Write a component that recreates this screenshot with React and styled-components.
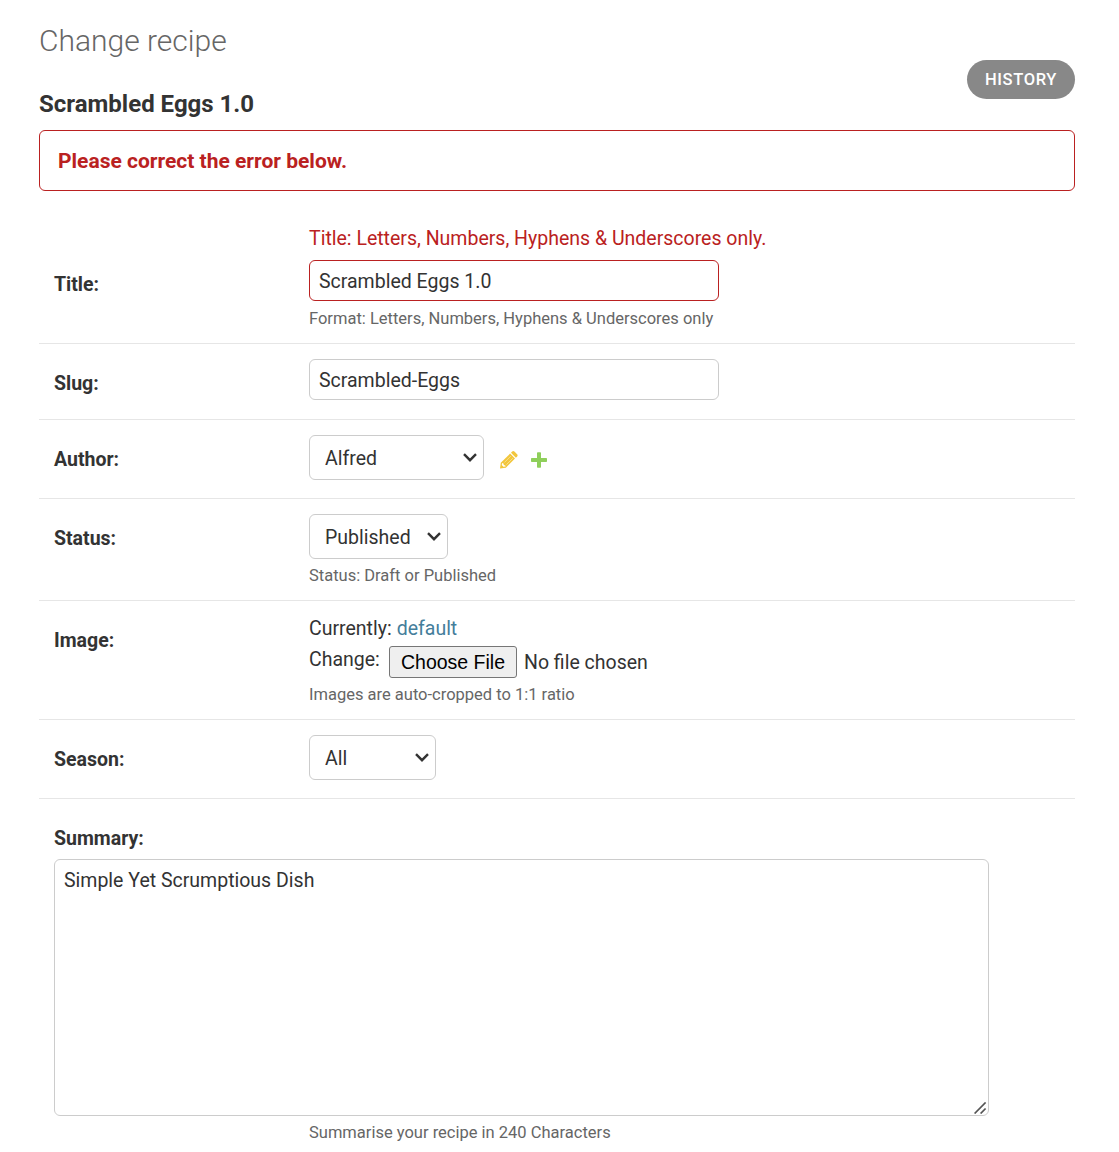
import React from "react";
import styled, { createGlobalStyle } from "styled-components";

const GlobalStyle = createGlobalStyle`
  * { box-sizing: border-box; }
  body {
    margin: 0;
    background: #fff;
    color: #333;
    font-family: Roboto, "Liberation Sans", sans-serif;
    font-size: 19.5px;
    line-height: 24px;
  }
`;

const Page = styled.main`
  width: 1119px;
  height: 1152px;
  padding: 22px 44px 0 39px;
  overflow: hidden;
`;

const PageTitle = styled.h1`
  margin: 0;
  font-size: 30px;
  font-weight: 300;
  line-height: 38px;
  color: #666;
`;

const ObjectHeader = styled.header`
  display: flex;
  justify-content: space-between;
  align-items: flex-end;
  height: 70px;
`;

const ObjectName = styled.h2`
  margin: 0 0 12px;
  font-size: 24px;
  font-weight: 700;
  line-height: 28px;
`;

const HistoryLink = styled.a`
  align-self: flex-start;
  width: 108px;
  height: 39px;
  border-radius: 20px;
  background: #888;
  color: #fff;
  font-size: 16.5px;
  font-weight: 500;
  letter-spacing: 0.65px;
  line-height: 39px;
  text-align: center;
  text-transform: uppercase;
`;

const ErrorNote = styled.p`
  margin: 0;
  height: 61px;
  padding: 0 18px;
  border: 1px solid #ba2121;
  border-radius: 6px;
  color: #ba2121;
  font-size: 21px;
  font-weight: 700;
  line-height: 60px;
`;

const Row = styled.div`
  display: flex;
  height: ${(p) => p.$height}px;
  padding: ${(p) => p.$top ?? 15}px 15px 0;
  border-bottom: 1px solid #e6e6e6;
`;

const Label = styled.label`
  flex: 0 0 255px;
  padding-top: ${(p) => p.$top ?? 13}px;
  font-weight: 700;
  line-height: 24px;
`;

const Field = styled.div`
  display: flex;
  flex-direction: column;
  align-items: flex-start;
`;

const FieldError = styled.p`
  margin: 0 0 9px;
  color: #ba2121;
`;

const TextInput = styled.input`
  width: 410px;
  height: 41px;
  padding: 2px 9px 0;
  border: 1px solid ${(p) => (p.$invalid ? "#ba2121" : "#ccc")};
  border-radius: 6px;
  outline: 0;
  background: #fff;
  color: #333;
  font: inherit;
`;

const Help = styled.p`
  margin: ${(p) => p.$gap ?? 7}px 0 0;
  padding-left: ${(p) => p.$indent ?? 0}px;
  color: #666;
  font-size: 16.5px;
  line-height: 22px;
`;

const SelectBox = styled.div`
  display: grid;
  align-items: center;
  width: ${(p) => p.$width}px;
  height: 45px;

  > * { grid-area: 1 / 1; }
  > svg { justify-self: end; margin-right: 6px; pointer-events: none; }
`;

const NativeSelect = styled.select`
  width: 100%;
  height: 100%;
  padding: 2px 15px 0;
  border: 1px solid #ccc;
  border-radius: 6px;
  appearance: none;
  background: #fff;
  color: #333;
  font: inherit;
`;

const RelatedControls = styled.div`
  display: flex;
  align-items: center;
`;

const IconLink = styled.a`
  display: flex;
  margin: 4px 0 0 ${(p) => p.$left}px;
`;

const FileLine = styled.div`
  display: flex;
  gap: 5px;
  margin-top: 1px;
`;

const UploadLine = styled.div`
  display: flex;
  margin-top: 6px;
`;

const UploadLabel = styled.span`
  width: 80px;
  padding-top: 1px;
`;

const FileLink = styled.a`
  color: #447e9b;
`;

const FileButton = styled.button`
  width: 128px;
  height: 32px;
  margin: -1px 7px 0 0;
  padding: 0;
  border: 1px solid #767676;
  border-radius: 3px;
  background: #efefef;
  color: #000;
  font: 19.5px "Liberation Sans", Arial, sans-serif;
`;

const FileStatus = styled.span`
  line-height: 32px;
`;

const SummarySection = styled.section`
  padding: 28px 15px 0;
`;

const SummaryLabel = styled.label`
  display: block;
  font-weight: 700;
`;

const SummaryBox = styled.div`
  display: grid;
  width: 935px;
  margin-top: 8px;

  > * { grid-area: 1 / 1; }
  > svg { place-self: end; margin: 0 2px 2px 0; }
`;

const SummaryText = styled.textarea`
  display: block;
  width: 935px;
  height: 257px;
  padding: 9px 9px 8px;
  border: 1px solid #ccc;
  border-radius: 6px;
  outline: 0;
  resize: none;
  color: #333;
  font: inherit;
`;

function Select({ width, value }) {
  return (
    <SelectBox $width={width}>
      <NativeSelect defaultValue={value}>
        <option>{value}</option>
      </NativeSelect>
      <svg width="15" height="10" viewBox="0 0 15 10" fill="none">
        <path d="M1 1.200 7 7.200l6-6" stroke="#333" strokeWidth="2.4" />
      </svg>
    </SelectBox>
  );
}

function PencilIcon() {
  return (
    <svg width="18" height="18" viewBox="0 0 18 18">
      <path d="M0 17.5 .8 11.800 10.100 2.600 15 7.500 5.800 16.700Z" fill="#f2c63c" />
      <path d="m11 1.800 1.200-1.200q1.100-1 2.200 0l2.700 2.700q1 1.100 0 2.200l-1.200 1.200Z" fill="#f2c63c" />
      <path d="m4.400 11.500 6.400-6.400M6.400 13.600 12.800 7.200" stroke="#fff" strokeWidth=".7" opacity=".6" />
      <path d="m1.700 14.100.5-2 1.300.5.3 1.400 1.500.4.4 1-2.200.4Z" fill="#fff" />
    </svg>
  );
}

function PlusIcon() {
  return (
    <svg width="16" height="16" viewBox="0 0 16 16">
      <path d="M6 1q0-.8.8-.8h2.500q.7 0 .7.800v5h5.200q.8 0 .8.800v2.400q0 .8-.8.800H10v5q0 .8-.7.800H6.800q-.8 0-.8-.8v-5H.8Q0 10 0 9.200V6.800Q0 6 .8 6H6Z" fill="#8fcf5b" />
    </svg>
  );
}

export default function App() {
  return (
    <>
      <GlobalStyle />
      <Page>
        <PageTitle>Change recipe</PageTitle>
        <ObjectHeader>
          <ObjectName>Scrambled Eggs 1.0</ObjectName>
          <HistoryLink>History</HistoryLink>
        </ObjectHeader>
        <ErrorNote>Please correct the error below.</ErrorNote>

        <Row $height={153} $top={36}>
          <Label $top={46}>Title:</Label>
          <Field>
            <FieldError>Title: Letters, Numbers, Hyphens &amp; Underscores only.</FieldError>
            <TextInput $invalid defaultValue="Scrambled Eggs 1.0" />
            <Help>Format: Letters, Numbers, Hyphens &amp; Underscores only</Help>
          </Field>
        </Row>

        <Row $height={76}>
          <Label>Slug:</Label>
          <Field>
            <TextInput defaultValue="Scrambled-Eggs" />
          </Field>
        </Row>

        <Row $height={79}>
          <Label>Author:</Label>
          <Field>
            <RelatedControls>
              <Select width={175} value="Alfred" />
              <IconLink $left={16}><PencilIcon /></IconLink>
              <IconLink $left={13}><PlusIcon /></IconLink>
            </RelatedControls>
          </Field>
        </Row>

        <Row $height={102}>
          <Label>Status:</Label>
          <Field>
            <Select width={139} value="Published" />
            <Help $gap={6}>Status: Draft or Published</Help>
          </Field>
        </Row>

        <Row $height={119}>
          <Label>Image:</Label>
          <Field>
            <FileLine>
              <span>Currently:</span>
              <FileLink>default</FileLink>
            </FileLine>
            <UploadLine>
              <UploadLabel>Change:</UploadLabel>
              <FileButton>Choose File</FileButton>
              <FileStatus>No file chosen</FileStatus>
            </UploadLine>
            <Help $gap={5}>Images are auto-cropped to 1:1 ratio</Help>
          </Field>
        </Row>

        <Row $height={79}>
          <Label>Season:</Label>
          <Field>
            <Select width={127} value="All" />
          </Field>
        </Row>

        <SummarySection>
          <SummaryLabel>Summary:</SummaryLabel>
          <SummaryBox>
            <SummaryText defaultValue="Simple Yet Scrumptious Dish" />
            <svg width="13" height="12" viewBox="0 0 13 12">
              <path d="M.6 11.500 11.600.5M6.600 11.500l5-5" stroke="#555" strokeWidth="1.700" />
            </svg>
          </SummaryBox>
          <Help $gap={6} $indent={255}>Summarise your recipe in 240 Characters</Help>
        </SummarySection>
      </Page>
    </>
  );
}
